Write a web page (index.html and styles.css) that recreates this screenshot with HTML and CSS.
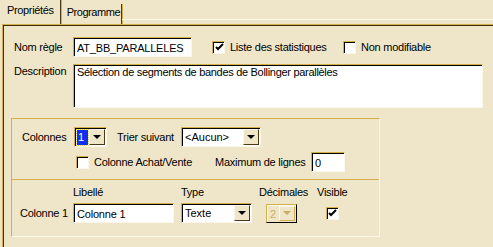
FILE: index.html
```html
<!DOCTYPE html>
<html lang="fr">
<head>
    <meta charset="UTF-8">
    <title>Propriétés</title>
    <link rel="stylesheet" href="styles.css">
</head>
<body>

    <!-- Onglets -->
    <div class="tabs">
        <div class="tab active">Propriétés</div>
        <div class="tab">Programme</div>
        <div class="tab-fill"></div>
    </div>

    <div class="panel">
        <div class="row row-name">
            <span class="label">Nom règle</span>
            <input class="field name-field" type="text" value="AT_BB_PARALLELES">
            <span class="check-item check-stats">
                <span class="checkbox checked"><svg width="9" height="9" viewBox="0 0 9 9"><path d="M1 4 L3 6 L8 1" fill="none" stroke="#000" stroke-width="2"/></svg></span>
                Liste des statistiques
            </span>
            <span class="check-item">
                <span class="checkbox"></span>
                Non modifiable
            </span>
        </div>

        <div class="row row-desc">
            <span class="label">Description</span>
            <textarea class="field desc-field">Sélection de segments de bandes de Bollinger parallèles</textarea>
        </div>

        <div class="group">
            <div class="group-top">
                <div class="row">
                    <span class="label label-cols">Colonnes</span>
                    <div class="combo combo-cols">
                        <span class="combo-value"><span class="selected">1</span></span>
                        <span class="combo-btn"><span class="arrow"></span></span>
                    </div>
                    <span class="label label-sort">Trier suivant</span>
                    <div class="combo combo-sort">
                        <span class="combo-value">&lt;Aucun&gt;</span>
                        <span class="combo-btn"><span class="arrow"></span></span>
                    </div>
                </div>
                <div class="row row-options">
                    <span class="check-item check-buy">
                        <span class="checkbox"></span>
                        Colonne Achat/Vente
                    </span>
                    <span class="label label-max">Maximum de lignes</span>
                    <input class="field max-field" type="text" value="0">
                </div>
            </div>

            <div class="group-bottom">
                <span></span>
                <span class="head">Libellé</span>
                <span class="head">Type</span>
                <span class="head">Décimales</span>
                <span class="head">Visible</span>

                <span class="label">Colonne 1</span>
                <input class="field col-name" type="text" value="Colonne 1">
                <div class="combo combo-type">
                    <span class="combo-value">Texte</span>
                    <span class="combo-btn"><span class="arrow"></span></span>
                </div>
                <div class="combo combo-dec disabled">
                    <span class="combo-value">2</span>
                    <span class="combo-btn"><span class="arrow"></span></span>
                </div>
                <span class="checkbox checked"><svg width="9" height="9" viewBox="0 0 9 9"><path d="M1 4 L3 6 L8 1" fill="none" stroke="#000" stroke-width="2"/></svg></span>
            </div>
        </div>
    </div>

</body>
</html>
```

FILE: styles.css
```css
body {
    margin: 0;
    background-color: #efe6ca;
    font-family: "Liberation Sans", Arial, sans-serif;
    font-size: 11px;
    letter-spacing: -0.25px;
    color: #000;
    width: 493px;
    height: 247px;
    overflow: hidden;
}
/* Onglets */
.tabs {
    display: flex;
    align-items: flex-end;
    height: 24px;
}
.tab {
    box-sizing: border-box;
    height: 20px;
    line-height: 16px;
    padding: 0 1px 0 5px;
    border-right: 1px solid #4a3a10;
    box-shadow: 1px 0 0 #d2b14c;
    letter-spacing: -0.45px;
}
.tab.active {
    height: 24px;
    padding: 2px 6px 0 7px;
    margin-right: 1px;
    letter-spacing: -0.35px;
}
.tab-fill {
    flex: 1;
    height: 4px;
    border-top: 1px solid #fbf7ea;
}
.panel {
    margin-left: 2px;
    height: 223px;
    border-top: 1px solid #d2b14c;
    border-left: 1px solid #d2b14c;
    box-shadow: inset 1px 1px 0 #3d2f08;
    padding: 12px 0 0 11px;
    box-sizing: border-box;
}
.row {
    display: flex;
    align-items: center;
}
.label {
    white-space: nowrap;
}
.panel > .row > .label {
    width: 59px;
}
/* Champs creusés */
.field {
    box-sizing: border-box;
    height: 20px;
    margin: 0;
    padding: 1px 1px 0 3px;
    font-family: inherit;
    font-size: 11px;
    letter-spacing: -0.2px;
    background-color: #fff;
    border: 1px solid;
    border-color: #d2b14c #fbf7ea #fbf7ea #d2b14c;
    box-shadow: inset 1px 1px 0 #000;
    outline: none;
}
.name-field {
    width: 119px;
}
.check-item {
    display: flex;
    align-items: center;
    gap: 5px;
    white-space: nowrap;
}
.check-stats {
    margin-left: 20px;
    width: 131px;
}
.checkbox {
    box-sizing: border-box;
    width: 13px;
    height: 13px;
    background-color: #fff;
    border: 1px solid;
    border-color: #d2b14c #fbf7ea #fbf7ea #d2b14c;
    box-shadow: inset 1px 1px 0 #000;
    display: flex;
    align-items: center;
    justify-content: center;
    padding: 1px 0 0 1px;
}
.row-desc {
    align-items: flex-start;
    margin-top: 7px;
}
.row-desc .label {
    padding-top: 1px;
}
.desc-field {
    width: 410px;
    height: 44px;
    resize: none;
    padding: 1px 3px;
    overflow: hidden;
    letter-spacing: -0.3px;
}
/* Groupe colonnes */
.group {
    margin: 10px 0 0 -3px;
    width: 369px;
    height: 119px;
    box-sizing: border-box;
    border: 1px solid;
    border-color: #d2b14c #fbf7ea #fbf7ea #d2b14c;
}
.group-top {
    padding: 8px 0 7px 10px;
    border-bottom: 1px solid #d2b14c;
}
.label-cols {
    width: 52px;
}
.label-sort {
    margin-left: 10px;
    width: 64px;
}
.combo {
    box-sizing: border-box;
    height: 20px;
    display: flex;
    align-items: stretch;
    background-color: #fff;
    border: 1px solid;
    border-color: #d2b14c #fbf7ea #fbf7ea #d2b14c;
    box-shadow: inset 1px 1px 0 #000;
    padding: 1px;
    letter-spacing: 0;
}
.combo-value {
    flex: 1;
    padding-left: 2px;
    line-height: 17px;
    white-space: nowrap;
}
.combo-btn {
    width: 16px;
    box-sizing: border-box;
    background-color: #efe6ca;
    border: 1px solid;
    border-color: #fbf7ea #4a3a10 #4a3a10 #fbf7ea;
    display: flex;
    align-items: center;
    justify-content: center;
}
.arrow {
    width: 0;
    height: 0;
    border-left: 4px solid transparent;
    border-right: 4px solid transparent;
    border-top: 4px solid #000;
}
.combo-cols {
    width: 33px;
}
.combo-cols .combo-value {
    padding: 1px;
}
.selected {
    display: block;
    height: 15px;
    line-height: 15px;
    padding-left: 1px;
    color: #fff;
    background-color: #1030f0;
    outline: 1px dotted #e8d060;
}
.combo-sort {
    width: 80px;
}
.row-options {
    margin-top: 5px;
}
.check-buy {
    margin-left: 54px;
    width: 139px;
}
.label-max {
    width: 96px;
}
.max-field {
    width: 34px;
}
.group-bottom {
    display: grid;
    grid-template-columns: 53px 108px 78px 58px 30px;
    grid-template-rows: 13px 20px;
    row-gap: 5px;
    align-items: center;
    padding: 5px 0 0 8px;
}
.col-name {
    width: 101px;
}
.combo-type {
    width: 71px;
}
.combo-dec {
    width: 31px;
    margin-left: 7px;
    height: 19px;
}
.disabled {
    color: #c9ad5e;
    background-color: #efe6ca;
    border-color: #d2b14c #000 #000 #d2b14c;
    box-shadow: inset 1px 1px 0 #fbf7ea;
}
.disabled .combo-btn {
    border-color: #fbf7ea #d2b14c #d2b14c #fbf7ea;
}
.disabled .arrow {
    border-top-color: #c9ad5e;
}
.group-bottom .checkbox {
    justify-self: center;
}
```
